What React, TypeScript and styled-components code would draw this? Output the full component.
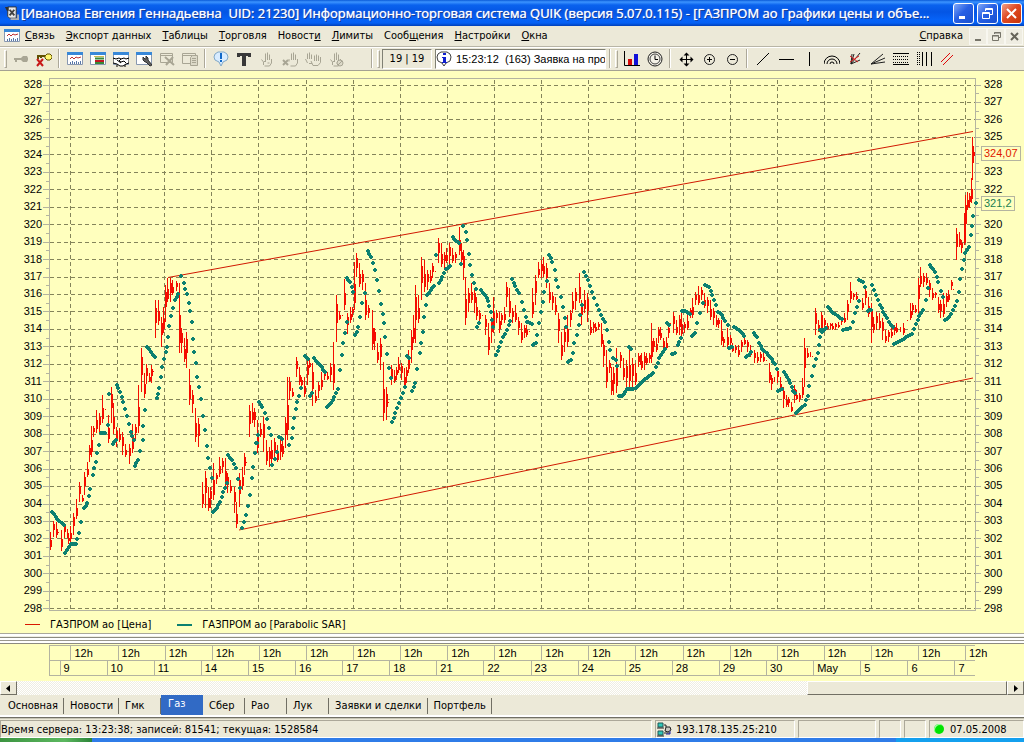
import React from "react";
import styled, { createGlobalStyle, css } from "styled-components";

const FACE = "#ece9d8";
const PAPER = "#ffffbe";
const UI = `"DejaVu Sans Condensed", "DejaVu Sans", sans-serif`;

const Global = createGlobalStyle`
  * { box-sizing: border-box; }
  body { margin: 0; background: ${FACE}; font-family: ${UI}; font-size: 11px; color: #000; }
  button { font: inherit; color: inherit; padding: 0; border: 0; background: none; cursor: default; }
  svg { display: block; flex-shrink: 0; }
`;

const Window = styled.div`
  display: flex;
  flex-direction: column;
  min-height: 100vh;
  overflow: hidden;
`;

/* ---------- title bar ---------- */
const TitleBar = styled.header`
  display: flex;
  align-items: center;
  height: 26px;
  padding: 0 2px 0 4px;
  gap: 2px;
  background: linear-gradient(#0a5ad8 0, #3c94ff 2px, #0a62ee 5px, #0455e4 12px, #0663f8 20px, #0560f4 23px, #0140b8 26px);
`;
const Title = styled.h1`
  flex: 1;
  min-width: 0;
  margin: 0;
  overflow: hidden;
  white-space: pre;
  font: 500 13px/20px "Open Sans", sans-serif;
  color: #fff;
  text-shadow: 0 0 1px #fff, 1px 1px 0 #0a2f88;
`;
const CaptionButton = styled.button<{ $danger?: boolean }>`
  display: grid;
  place-items: center;
  width: 21px;
  height: 21px;
  margin-left: 1px;
  border: 1px solid #fff;
  border-radius: 3px;
  background: ${(p) => (p.$danger ? "linear-gradient(135deg, #f0a088, #e04a24 45%, #c83408)" : "linear-gradient(135deg, #80a8f8, #2860e4 45%, #1850d0)")};
`;

/* ---------- menu bar ---------- */
const MenuBar = styled.nav`
  display: flex;
  align-items: center;
  height: 20px;
  padding: 0 1px 0 4px;
`;
const MenuItem = styled.button<{ $last?: boolean }>`
  height: 18px;
  padding: 0 6px 2px 5px;
  white-space: nowrap;
  ${(p) => p.$last && css`margin-left: auto;`}
`;
const MdiButton = styled.button`
  display: grid;
  place-items: center;
  width: 18px;
  height: 17px;
  border: 1px solid #f8f7f0;
  background: #efede2;
`;

/* ---------- toolbar ---------- */
const Toolbar = styled.div`
  display: flex;
  align-items: center;
  height: 25px;
  padding-left: 3px;
  border-top: 1px solid #b8b5a6;
  border-bottom: 1px solid #a5a292;
  box-shadow: inset 0 1px 0 #fff;
`;
const Tool = styled.button`
  display: grid;
  place-items: center;
  width: 23px;
  height: 22px;
  flex: none;
`;
const Grip = styled.i`
  width: 3px;
  height: 18px;
  margin: 0 2px 0 1px;
  border: 1px solid;
  border-color: #fff #aca899 #aca899 #fff;
`;
const Divider = styled.i`
  width: 2px;
  height: 19px;
  margin: 0 3px;
  border-left: 1px solid #aca899;
  border-right: 1px solid #fff;
`;
const Gap = styled.i`
  width: 21px;
`;
const Field = styled.div<{ $w: number; $white?: boolean }>`
  display: flex;
  align-items: center;
  justify-content: ${(p) => (p.$white ? "flex-start" : "center")};
  gap: 4px;
  flex: none;
  width: ${(p) => p.$w}px;
  height: 20px;
  margin-right: ${(p) => (p.$white ? 0 : 3)}px;
  overflow: hidden;
  white-space: pre;
  font: ${(p) => (p.$white ? `11px/16px "Liberation Sans", Arial, sans-serif` : `11px/16px ${UI}`)};
  border: 1px solid;
  border-color: #808074 #fff #fff #808074;
  background: ${(p) => (p.$white ? "#fff" : "transparent")};
`;

/* ---------- chart ---------- */
const Chart = styled.main`
  background: ${PAPER};
  padding-top: 6px;
`;
const PlotRow = styled.div`
  display: flex;
  height: 539px;
  font: 11px/15px "Liberation Sans", Arial, sans-serif;
`;
const Scale = styled.div<{ $right?: boolean }>`
  position: relative;
  display: flex;
  flex-direction: column;
  justify-content: space-between;
  flex: none;
  width: 43px;
  padding: ${(p) => (p.$right ? "0 0 0 3px" : "0 1px 0 0")};
  text-align: ${(p) => (p.$right ? "left" : "right")};
`;
const Tick = styled.span<{ $hidden?: boolean }>`
  visibility: ${(p) => (p.$hidden ? "hidden" : "visible")};
`;
const PriceTag = styled.output<{ $at: number; $color: string }>`
  position: absolute;
  left: 0;
  top: ${(p) => p.$at}px;
  padding: 0 2px;
  line-height: 13px;
  border: 1px solid #b4b4a0;
  background: ${PAPER};
  color: ${(p) => p.$color};
`;
const Plot = styled.svg`
  flex: 1;
  min-width: 0;
  height: 100%;
`;
const Legend = styled.div`
  display: flex;
  align-items: center;
  height: 17px;
  padding-left: 25px;
`;
const LegendItem = styled.span<{ $color: string; $thick: number }>`
  display: flex;
  align-items: center;
  gap: 10px;
  margin-right: 26px;
  &::before {
    content: "";
    width: 15px;
    height: ${(p) => p.$thick}px;
    background: ${(p) => p.$color};
  }
`;
const Splitter = styled.div`
  height: 11px;
  background: linear-gradient(#aaa89a 0 1px, #fff 1px 3px, #f0eee2 3px 4px, #8c8a80 4px 5px, #fff 5px 7px, #9a988c 7px 8px, #fff 8px 10px, #8c8a80 10px 11px);
`;
const TimeAxis = styled.div`
  padding: 1px 49px 5px;
  background: ${PAPER};
  font: 11px/15px "Liberation Sans", Arial, sans-serif;
`;
const TimeRow = styled.div<{ $first: number; $last: number }>`
  display: grid;
  grid-template-columns: minmax(0, ${(p) => p.$first}fr) repeat(19, minmax(0, 471fr)) minmax(0, ${(p) => p.$last}fr);
  height: 15px;
  border-top: 1px solid #b4b4a0;
  border-left: 1px solid #b4b4a0;
  &:last-child { height: 16px; border-bottom: 1px solid #b4b4a0; }
`;
const TimeCell = styled.span`
  padding-left: 3px;
  white-space: nowrap;
  border-left: 1px solid #b4b4a0;
`;

/* ---------- scroll bar ---------- */
const raised = css`
  border: 1px solid;
  border-color: #fff #716f64 #716f64 #fff;
  background: ${FACE};
`;
const ScrollBar = styled.div`
  display: flex;
  height: 14px;
  background: repeating-conic-gradient(#fff 0 25%, #efede2 0 50%) 0 0 / 2px 2px;
`;
const ScrollButton = styled.button`
  ${raised}
  display: grid;
  place-items: center;
  width: 17px;
  flex: none;
`;
const ScrollSpace = styled.div`
  flex: 792 1 0;
`;
const ScrollThumb = styled.div`
  ${raised}
  flex: 199 1 0;
`;

/* ---------- tabs ---------- */
const Tabs = styled.div`
  display: flex;
  height: 22px;
  padding-left: 2px;
  border-bottom: 2px solid #fff;
`;
const Tab = styled.button<{ $active?: boolean }>`
  min-width: 42px;
  height: 20px;
  padding: 1px 6px 0;
  text-align: left;
  white-space: nowrap;
  background: linear-gradient(#716f64, #716f64) right 3px / 1px 16px no-repeat;
  ${(p) =>
    p.$active &&
    css`
      padding: 0 7px 3px;
      color: #fff;
      background: #316ac5;
    `}
`;

/* ---------- status bar ---------- */
const StatusBar = styled.footer`
  display: flex;
  height: 21px;
  padding-top: 2px;
  gap: 3px;
  border-top: 1px solid #716f64;
  box-shadow: inset 0 1px 0 #c8c5b4;
`;
const Panel = styled.div<{ $w?: number }>`
  display: flex;
  align-items: center;
  gap: 4px;
  ${(p) => (p.$w ? `flex: none; width: ${p.$w}px;` : "flex: 1; min-width: 0;")}
  white-space: nowrap;
  border: 1px solid;
  border-color: #aca899 #fff #fff #aca899;
`;
const Led = styled.i`
  width: 10px;
  height: 10px;
  margin-left: 4px;
  margin-right: 2px;
  border-radius: 50%;
  background: #00e400;
  box-shadow: inset 1px 1px 0 #a0ffa0;
`;
const TaskbarEdge = styled.div`
  flex: 1;
  min-height: 4px;
  background:
    linear-gradient(90deg, #3c9440, #5cb860 70%, #2c8438) left / 92px 100% no-repeat,
    linear-gradient(#2f7ce8, #2f7ce8) left / 87.5% 100% no-repeat,
    #14a0ee;
`;

/* ---------- quotes ---------- */
/* Each block holds x, high, low triples, three units per plot pixel, from the block's origin. */
type Block = { ox: number; oy: number; bars: number[]; sar: number[][] };

const blocks: Block[] = [
  {
    ox: 0,
    oy: 240,
    bars: [
      151, 875, 930, 160, 843, 890, 169, 845, 895, 176, 875, 878, 184, 870, 932, 193, 850, 895, 202, 868, 895, 206, 890, 912,
      212, 858, 905, 219, 820, 885, 228, 778, 838, 238, 725, 785, 246, 765, 785, 254, 695, 765, 262, 665, 710, 267, 615, 665,
      273, 558, 650, 281, 558, 592, 290, 510, 580, 299, 520, 578, 308, 465, 550, 317, 507, 510, 325, 525, 610, 333, 440, 550,
      341, 490, 582, 349, 562, 622, 358, 565, 605, 367, 575, 645, 376, 612, 650, 388, 612, 672, 397, 553, 640, 406, 553, 598,
      414, 435, 580, 423, 325, 455, 432, 400, 475, 440, 373, 432, 447, 400, 425, 454, 375, 428, 460, 392, 395, 466, 180, 293,
      474, 180, 255, 483, 230, 320, 490, 200, 280, 495, 135, 245, 502, 113, 185, 510, 115, 185, 518, 120, 165, 528, 122, 152,
      537, 130, 340, 545, 265, 340, 553, 295, 365, 560, 275, 385, 569, 388, 495, 577, 450, 520, 587, 505, 605, 596, 535, 622,
      607, 725, 803, 616, 693, 803, 625, 740, 812, 632, 740, 805, 640, 670, 780, 650, 700, 733, 659, 650, 710, 667, 655, 700,
      675, 655, 740, 683, 700, 760, 692, 720, 760, 702, 740, 820, 709, 785, 865, 719, 700, 800, 728, 680, 750, 734, 640, 705,
      740, 665, 668, 748, 495, 592, 756, 490, 550, 764, 505, 560, 773, 540, 640,
    ],
    sar: [
      [157, 815, 172, 838, 191, 855],
      [195, 938, 212, 913, 227, 912, 236, 880, 244, 845, 252, 805, 261, 788, 270, 748, 278, 705, 287, 665, 296, 615, 304, 580, 316, 578, 324, 555],
      [328, 463],
      [338, 612, 347, 600],
      [350, 435, 360, 455, 370, 485, 382, 528, 392, 575, 401, 600],
      [404, 677, 413, 660, 421, 633, 428, 600, 430, 558, 436, 510],
      [440, 320, 452, 335, 464, 352],
      [470, 475, 474, 462, 478, 443, 482, 410, 487, 380, 491, 357, 497, 335, 500, 320, 505, 292, 508, 258, 514, 228, 518, 203, 526, 180, 535, 162],
      [543, 108, 551, 130, 555, 148, 560, 163, 566, 190, 569, 213, 575, 245, 578, 297, 583, 335, 587, 368, 592, 410, 596, 442, 602, 478, 610, 527, 614, 570, 620, 618, 623, 655, 630, 685, 637, 713],
      [640, 817, 650, 805, 660, 785, 670, 755, 680, 730],
      [684, 645, 697, 660, 708, 685, 715, 718, 719, 745],
      [725, 865, 733, 845, 737, 825, 743, 797, 750, 765, 755, 715, 760, 680, 764, 640, 769, 608, 773, 585],
    ],
  },
  {
    ox: 240,
    oy: 200,
    bars: [
      62, 670, 710, 70, 650, 755, 78, 720, 795, 87, 740, 800, 95, 720, 790, 104, 715, 780, 112, 735, 785, 120, 720, 780, 128, 710, 770,
      135, 650, 745, 141, 530, 720, 149, 530, 600, 158, 565, 590, 169, 470, 530, 177, 500, 555, 185, 530, 570, 193, 530, 590,
      202, 480, 555, 209, 478, 505, 217, 490, 618, 227, 570, 610, 236, 545, 595, 245, 515, 570, 253, 510, 540, 262, 515, 540,
      271, 490, 545, 280, 425, 570, 289, 285, 425, 298, 333, 360, 306, 345, 348, 314, 238, 330, 322, 340, 402, 330, 320, 370,
      338, 322, 350, 344, 185, 330, 350, 158, 230, 359, 190, 260, 368, 210, 270, 376, 250, 360, 386, 315, 355, 396, 330, 450,
      404, 385, 450, 412, 430, 490, 420, 415, 510, 430, 485, 662, 438, 560, 660, 445, 605, 608, 454, 495, 555, 462, 510, 550,
      469, 500, 540, 475, 470, 520, 484, 490, 540, 492, 505, 560, 499, 500, 550, 505, 450, 520, 513, 390, 490, 520, 345, 430,
      527, 255, 430, 536, 285, 370, 545, 170, 300, 553, 180, 275, 561, 210, 270, 570, 210, 250, 578, 190, 235, 586, 213, 216,
      595, 115, 190, 603, 130, 200, 612, 155, 205, 620, 145, 190, 629, 130, 195, 638, 145, 190, 647, 155, 190, 657, 80, 165,
    ],
    sar: [
      [50, 730],
      [58, 605, 67, 622, 75, 640, 82, 657, 87, 685, 92, 706],
      [96, 795, 104, 778, 112, 757],
      [118, 712, 127, 716],
      [148, 736, 155, 715, 158, 685, 163, 655, 168, 628, 172, 606, 176, 588, 184, 565],
      [196, 468, 205, 478],
      [209, 588, 217, 578],
      [223, 475, 235, 490, 245, 502, 254, 515],
      [260, 622, 272, 608, 283, 590, 294, 568, 299, 510, 305, 465, 310, 430, 314, 400, 320, 366],
      [320, 233, 330, 245, 336, 260, 340, 275],
      [346, 405, 350, 395, 355, 380, 360, 350, 367, 310, 375, 280],
      [383, 153, 392, 172, 400, 188, 405, 210, 412, 240, 418, 272, 424, 312, 429, 342, 433, 370, 436, 410, 442, 462, 446, 505, 452, 535],
      [455, 667, 466, 640, 478, 608, 488, 580, 496, 560],
      [502, 468, 508, 473],
      [516, 573, 525, 550, 532, 508, 539, 458, 542, 430, 548, 395, 553, 350, 557, 316, 561, 285, 572, 270, 582, 258],
      [588, 165],
      [598, 248, 607, 230, 617, 208, 631, 197],
      [638, 112, 648, 122, 658, 128],
      [663, 192],
    ],
  },
  {
    ox: 440,
    oy: 200,
    bars: [
      65, 130, 190, 70, 150, 240, 77, 230, 375, 84, 265, 335, 93, 250, 310, 102, 265, 340, 110, 290, 360, 118, 330, 375, 127, 345, 348,
      137, 345, 405, 145, 370, 465, 154, 350, 430, 161, 290, 400, 168, 330, 370, 177, 335, 400, 185, 340, 375, 192, 320, 370,
      200, 245, 320, 208, 265, 350, 217, 325, 370, 226, 315, 365, 235, 350, 405, 244, 370, 430, 252, 375, 415, 260, 375, 410,
      268, 393, 396, 278, 265, 355, 286, 225, 315, 295, 185, 235, 303, 180, 235, 311, 170, 230, 319, 190, 265, 329, 250, 310,
      338, 275, 330, 347, 290, 345, 356, 340, 430, 364, 395, 480, 373, 380, 455, 382, 345, 440, 390, 330, 380, 398, 275, 340,
      407, 265, 330, 418, 220, 310, 425, 300, 375, 434, 270, 340, 443, 280, 365, 450, 360, 405, 459, 365, 400, 467, 370, 395,
      475, 365, 390, 483, 370, 440, 490, 420, 500, 499, 450, 565, 508, 480, 520, 513, 500, 585, 521, 500, 585, 530, 445, 580,
      540, 455, 505, 549, 475, 540, 560, 480, 570, 568, 440, 560, 577, 475, 560, 586, 490, 555, 594, 460, 500, 603, 460, 510,
    ],
    sar: [
      [70, 78, 78, 95, 82, 120, 88, 163, 91, 195, 96, 225, 101, 248, 107, 268],
      [111, 380, 118, 370],
      [124, 270, 135, 285, 144, 302, 147, 318, 152, 335, 155, 360, 160, 380],
      [168, 465, 178, 440, 190, 412, 200, 390, 211, 362],
      [216, 238, 226, 258, 237, 280, 245, 305, 252, 330, 257, 350, 260, 365, 275, 372],
      [278, 434, 287, 428, 292, 405, 298, 370, 303, 335, 308, 305, 312, 275, 320, 242],
      [326, 165, 337, 185, 345, 210, 349, 240, 355, 262, 363, 290, 370, 322, 374, 355, 379, 382],
      [383, 485, 392, 480, 398, 460, 403, 430, 410, 405, 416, 375, 420, 345, 425, 315],
      [431, 215, 443, 240, 456, 275, 470, 315, 482, 345, 495, 367, 502, 390, 506, 425, 511, 450, 519, 475, 527, 480, 530, 498],
      [536, 588, 545, 588, 562, 568, 580, 568, 600, 552, 615, 538, 640, 520, 648, 500, 658, 475, 675, 448],
      [567, 442, 573, 446],
      [680, 370, 688, 376],
    ],
  },
  {
    ox: 640,
    oy: 260,
    bars: [
      1, 285, 315, 14, 275, 330, 20, 280, 315, 28, 280, 310, 34, 190, 310, 41, 235, 275, 50, 235, 275, 56, 200, 250, 62, 200, 240,
      70, 235, 275, 78, 230, 270, 84, 195, 235, 92, 190, 193, 100, 155, 220, 109, 180, 225, 117, 165, 225, 125, 160, 235, 133, 185, 220,
      141, 160, 210, 150, 145, 175, 158, 115, 175, 167, 95, 135, 175, 78, 135, 185, 82, 120, 193, 100, 145, 202, 110, 160,
      210, 120, 180, 219, 145, 195, 228, 165, 200, 235, 175, 205, 243, 180, 255, 251, 230, 260, 262, 205, 260, 270, 225, 265,
      278, 250, 275, 287, 255, 280, 296, 255, 290, 305, 240, 275, 314, 225, 255, 323, 240, 275, 332, 255, 290, 343, 270, 310,
      352, 275, 310, 360, 275, 305, 370, 280, 305, 379, 301, 304, 387, 310, 370, 395, 345, 390, 403, 350, 365, 411, 325, 370,
      421, 350, 395, 430, 380, 445, 438, 405, 440, 446, 410, 440, 454, 425, 455, 462, 375, 430, 470, 390, 420, 478, 400, 425,
      486, 355, 415, 493, 235, 380, 501, 265, 295, 510, 275, 290, 517, 288, 291, 526, 145, 225, 535, 180, 215, 545, 155, 200,
    ],
    sar: [
      [95, 283, 105, 278, 113, 255, 122, 235],
      [125, 152, 140, 155, 150, 162],
      [155, 228, 165, 220, 172, 190, 180, 160, 188, 128],
      [195, 75, 207, 82, 217, 105, 227, 135, 235, 155, 245, 165, 255, 182, 263, 195],
      [268, 264, 277, 260],
      [282, 202, 297, 210, 313, 228],
      [317, 292, 326, 285, 334, 275],
      [341, 220, 350, 232, 357, 250, 366, 268, 380, 280, 395, 297, 405, 312, 410, 328],
      [413, 392, 427, 387],
      [432, 337, 441, 350, 450, 370, 460, 392, 464, 398],
      [467, 460, 480, 448, 494, 434, 503, 408, 508, 378, 515, 348, 521, 318, 527, 298, 533, 280, 537, 255, 545, 215, 558, 205],
      [563, 142, 580, 158, 605, 178],
      [610, 210, 630, 205, 638, 185, 645, 160, 650, 140, 656, 122],
      [658, 60, 668, 67, 675, 80],
      [683, 152, 692, 150],
    ],
  },
  {
    ox: 820,
    oy: 100,
    bars: [
      4, 640, 690, 13, 655, 690, 21, 670, 690, 30, 670, 688, 38, 670, 690, 46, 670, 690, 55, 665, 685, 65, 655, 675, 73, 640, 670,
      82, 600, 660, 91, 545, 610, 100, 580, 600, 109, 575, 600, 117, 597, 600, 127, 595, 630, 137, 560, 615, 146, 590, 650,
      154, 610, 730, 161, 650, 700, 169, 635, 690, 178, 640, 690, 187, 655, 720, 196, 690, 730, 205, 690, 725, 213, 680, 715,
      222, 675, 705, 230, 670, 700, 240, 680, 695, 250, 670, 705, 262, 660, 663, 270, 610, 660, 278, 610, 645, 287, 615, 640,
      295, 535, 640, 302, 500, 560, 311, 520, 560, 319, 520, 555, 328, 540, 590, 336, 565, 600, 345, 575, 595, 354, 590, 640,
      361, 600, 655, 370, 580, 650, 378, 580, 620, 386, 570, 605, 394, 540, 570, 400, 567, 570, 410, 385, 480, 417, 395, 440,
      425, 420, 460, 432, 340, 435, 437, 285, 430, 443, 275, 330, 448, 280, 325, 453, 235, 310, 456, 110, 240, 461, 140, 172,
    ],
    sar: [
      [0, 712, 1, 690, 12, 690, 18, 684],
      [155, 555, 168, 585, 180, 615, 195, 645, 208, 665, 220, 682],
      [222, 733, 240, 724, 258, 712, 275, 703, 287, 672, 298, 648, 310, 630, 318, 600, 325, 565],
      [329, 495, 345, 515, 355, 545, 363, 572, 370, 590],
      [374, 661, 388, 652, 400, 630, 412, 603, 416, 575, 421, 537, 425, 507, 431, 480, 436, 460, 447, 440],
      [452, 405],
      [457, 378],
      [460, 348],
      [467, 310],
    ],
  },
];

const priceY = (v: number) => Math.round(84.5 + (328 - v) * 17.46);
const prices = Array.from({ length: 31 }, (_, i) => 328 - i);
const noons = Array.from({ length: 20 }, (_, i) => Math.round(70 + i * 47.12));

/* One bar: a one-pixel wick with a two-pixel body over its middle part. */
const barPath = blocks
  .flatMap((b) => {
    const out: string[] = [];
    for (let i = 0; i < b.bars.length; i += 3) {
      const x = Math.round(b.ox + b.bars[i] / 3 - 0.4);
      const hi = Math.round(b.oy + b.bars[i + 1] / 3);
      const lo = Math.max(hi + 1, Math.round(b.oy + b.bars[i + 2] / 3));
      const h = lo - hi;
      out.push(`M${x} ${hi}h1v${h}h-1z`);
      if (h > 5) {
        const from = hi + Math.round(h * (i % 2 ? 0.2 : 0.45));
        out.push(`M${x + 1} ${from}h1v${Math.round(h * 0.4)}h-1z`);
      }
    }
    return out;
  })
  .join("");

const dots: [number, number][] = blocks.flatMap((b) =>
  b.sar.flatMap((run) => {
    const pts: [number, number][] = [];
    const last = run.length - 2;
    for (let i = 0; i < last; i += 2) {
      const [x0, y0, x1, y1] = run.slice(i, i + 4);
      const n = Math.max(1, Math.round((x1 - x0) / 6));
      for (let k = 0; k < n; k++) pts.push([x0 + ((x1 - x0) * k) / n, y0 + ((y1 - y0) * k) / n]);
    }
    pts.push([run[last], run[last + 1]]);
    return pts.map(([x, y]): [number, number] => [Math.round(b.ox + x / 3), Math.round(b.oy + y / 3)]);
  })
);
const dotPath = dots.map(([x, y]) => `M${x - 1} ${y - 2}h2v1h1v2h-1v1h-2v-1h-1v-2h1z`).join("");

const PriceChart = () => (
  <Plot viewBox="43 77 938 539" preserveAspectRatio="none" role="img" aria-label="ГАЗПРОМ ао">
    <g shapeRendering="crispEdges" fill="none">
      <g stroke="#84845a" strokeDasharray="4 3">
        {prices.map((v) => (
          <path key={v} d={`M50 ${priceY(v) + 0.5}H975`} />
        ))}
        {noons.map((x) => (
          <path key={x} d={`M${x + 0.5} 80V610`} />
        ))}
      </g>
      <path d="M49.5 610.5V78.5H975.5V610.5z" stroke="#b4b4a0" />
      <g stroke="#b4b4a0">
        {prices.map((v) => (
          <path key={v} d={`M43 ${priceY(v) + 0.5}h6M976 ${priceY(v) + 0.5}h5`} />
        ))}
        {prices.slice(1).map((v) => (
          <path key={v} d={`M46 ${priceY(v + 0.5) + 0.5}h3M976 ${priceY(v + 0.5) + 0.5}h3`} />
        ))}
      </g>
      <path d={barPath} fill="#f40c00" />
    </g>
    <path d="M168 277.5L973 131.5M239 530L973 378" stroke="#d01800" fill="none" />
    <path d={dotPath} fill="#0c8070" shapeRendering="crispEdges" />
  </Plot>
);

/* ---------- icons, on a 16 pixel grid ---------- */
const GREY = "#a8a594";
const hand = "M4.500 14V11L2.500 8.500M6.500 10V2.500M8.500 9V1.500M10.500 9V3.500M12.500 8v4l-2 3h-5M5 10.500h2M8.500 12h2";
const sheet = (
  <>
    <path d="M.5 2.500h15v11h-15z" fill="#fff" stroke="#8898b0" />
    <path d="M0 1h16v3H0z" fill="#3888d8" />
  </>
);

const glyphs: Record<string, React.ReactNode> = {
  key: <path d="M1 7h7v2H1zM2 9h2v2H2zM8 7l2-2h4l1 2v2l-1 2h-4L8 9z" fill={GREY} />,
  keyOff: (
    <>
      <path d="M1 5h8M2 5v3M5 5v2" stroke="#605000" strokeWidth="2" />
      <path d="M9 5l2-2h3l2 2v2l-2 2h-3L9 7z" fill="#fff870" stroke="#605000" />
      <path d="M1 8l6 7M7 8l-6 7" stroke="#c81818" strokeWidth="2" />
    </>
  ),
  chart: (
    <>
      {sheet}
      <path d="M3 8l2-2 2 2 2-2 2 1 3-1" stroke="#c03030" />
      <path d="M3.500 13v-2M5.500 13v-3M7.500 13v-2M9.500 13v-3M11.500 13v-2M13.500 13v-3" stroke="#5878a8" />
    </>
  ),
  table: (
    <>
      {sheet}
      <path d="M4 5.500h10" stroke="#c8b850" />
      <path d="M5 7.500h9M5 12h9" stroke="#388838" strokeWidth="2" />
      <path d="M5 10h9" stroke="#c01820" strokeWidth="2" />
    </>
  ),
  deal: (
    <>
      {sheet}
      <path d="M0 7l3 1 3-1 2 1 3-1 2 1 3-1v5l-3 1-3 2H7l-3-2-4-1z" fill="#fff" stroke="#000" />
      <path d="M4 9l4 3M8 8l-2 2 2 1 3-1 2 2M3 15h2M11 15h2" stroke="#000" />
    </>
  ),
  tools: (
    <>
      {sheet}
      <path d="M7 6l0 3 2 2 1 0 4 4 2-1-4-5V7l-2-2v3H9z" fill="#606060" stroke="#303030" />
    </>
  ),
  sheetOff: (
    <>
      <path d="M1.500 2.500h12v9h-12zM1 4.500h12" stroke={GREY} />
      <path d="M6 6l9 8M14 6l-7 8" stroke={GREY} strokeWidth="2" />
    </>
  ),
  sheets: (
    <>
      <path d="M.5 2.500h13v10h-13zM1 4.500h12" stroke={GREY} />
      <path d="M8.500 6.500l2-2h5v10h-7z" fill="#dcd9c8" stroke={GREY} />
      <path d="M10 7.500h4M10 9.500h4M10 11.500h4" stroke={GREY} />
    </>
  ),
  alert: (
    <>
      <path d="M5 1h6l3 2 1 3-1 3-4 2-2 4-2-4-4-2-1-3 1-3z" fill="#d8ecff" stroke="#80a8c8" />
      <path d="M7 2h2v6H7zM7 9h2v2H7z" fill="#1068c8" />
    </>
  ),
  text: <path d="M1 2h14v4h-3V5H10v10H6V5H4v1H1z" fill="#383838" />,
  hand: <path d={hand} stroke={GREY} />,
  handOff: (
    <>
      <path d="M7 10.500V8M9.500 9V2.500M11.500 9V1.500M13.500 9V3.500M15.500 8v4l-2 3h-5" stroke={GREY} />
      <path d="M1 9l5 5M6 9l-5 5" stroke={GREY} strokeWidth="2" />
    </>
  ),
  hands: (
    <>
      <path d="M.5 8l2 4M2.500 8V2.500M4.500 8V1.500M6.500 8V3.500M4 12.500h3" stroke={GREY} />
      <path d="M6 10l2 4.500h5l2.500-3V6M9.500 10V4.500M11.500 10V3.500M13.500 10V4.500" stroke={GREY} />
    </>
  ),
  handStop: (
    <>
      <path d={hand} stroke={GREY} />
      <circle cx="12" cy="12" r="3" fill="#dcd9c8" stroke={GREY} />
      <path d="M10 14l4-4" stroke={GREY} />
    </>
  ),
  info: (
    <>
      <path d="M5 1h6l3 2 1 3-1 4-4 2-2 3-2-3-4-2-1-4 1-3z" fill="#fff" stroke="#404040" />
      <path d="M7 2h3v2H7zM6 6h4v5h1v1H6v-1h1V7H6z" fill="#1020d0" />
    </>
  ),
  columns: (
    <>
      <path d="M.5 0v14.500h15.500" stroke="#000" strokeWidth="1" />
      <path d="M4 8h4v6H4z" fill="#d80808" />
      <path d="M10 3h4v11h-4z" fill="#1010d8" />
    </>
  ),
  clock: (
    <>
      <circle cx="8" cy="8" r="7" fill="#f4f2e8" stroke="#202020" />
      <circle cx="8" cy="8" r="5" stroke="#404040" />
      <path d="M8 4.500v4h3" stroke="#000" />
    </>
  ),
  move: (
    <>
      <path d="M8.500 3v11M3 8.500h11" stroke="#000" />
      <path d="M8.500 1.500l3 3h-6zM8.500 15.500l3-3h-6zM1.500 8.500l3-3v6zM15.500 8.500l-3-3v6z" fill="#000" />
    </>
  ),
  zoomIn: (
    <>
      <circle cx="8.500" cy="8.500" r="5" stroke="#202020" />
      <path d="M6 8.500h5M8.500 6v5" stroke="#000" />
    </>
  ),
  zoomOut: (
    <>
      <circle cx="8.500" cy="8.500" r="5" stroke="#202020" />
      <path d="M6 8.500h5" stroke="#000" />
    </>
  ),
  line: <path d="M2 14L14 2" stroke="#000" />,
  hline: <path d="M1 8.500h15" stroke="#000" />,
  vline: <path d="M8.500 1v14" stroke="#000" />,
  arcs: <path d="M0 13a8 8 0 0 1 16 0M3 13a5 5 0 0 1 10 0M6 13a2 2 0 0 1 4 0" stroke="#000" />,
  fanRed: (
    <>
      <path d="M4 13L13 2M4 13L5 3M4 13L13 9M4 13l3-10" stroke="#202020" />
      <path d="M3 5l8 6M3 11l9-6" stroke="#e02020" />
    </>
  ),
  fan: <path d="M1 13L13 3M1 13L15 7M1 13L15 11" stroke="#202020" />,
  hlines: (
    <>
      <path d="M0 2.500h16M0 13.500h16" stroke="#000" />
      <path d="M0 5.500h16M0 8.500h16M0 11.500h16" stroke="#000" strokeDasharray="1 1" />
    </>
  ),
  vlines: (
    <>
      <path d="M1.500 1v14M3.500 1v14" stroke="#000" strokeDasharray="1 1" />
      <path d="M6.500 1v14M10.500 1v14M15.500 1v14" stroke="#000" />
    </>
  ),
  channel: <path d="M2 11L11 2M4 14L14 4" stroke="#e00808" strokeWidth="1" />,
  app: (
    <>
      <path d="M4 1h9v12H6L4 11z" fill="#e8e8e8" stroke="#303030" />
      <path d="M1 1h4v4H3z" fill="#303030" />
      <path d="M6 4l5 6M11 4l-5 6" stroke="#404040" strokeWidth="2" />
      <path d="M7 14h8V9" stroke="#b0b0b0" strokeWidth="2" />
    </>
  ),
  network: (
    <>
      <path d="M2 2h5v4H2zM2 10h5v4H2z" fill="#30c8b8" stroke="#205858" />
      <path d="M1 7h7M1 15h7M8 4h2v2M8 12h6" stroke="#202020" />
      <path d="M10 6l4 0 1 3-3 2-3-1z" fill="#c8c8c0" stroke="#202020" />
      <path d="M14 10v3h-4" stroke="#2020a0" />
    </>
  ),
};

const Icon = ({ name, size = 16 }: { name: string; size?: number }) => (
  <svg width={size} height={size} viewBox="0 0 16 16" fill="none" aria-hidden="true">
    {glyphs[name]}
  </svg>
);

const Tools = ({ items }: { items: [string, string][] }) => (
  <>
    {items.map(([icon, label]) => (
      <Tool key={icon} aria-label={label}>
        <Icon name={icon} />
      </Tool>
    ))}
  </>
);

const menus: [string, string, string][] = [
  ["", "С", "вязь"],
  ["", "Э", "кспорт данных"],
  ["", "Т", "аблицы"],
  ["", "Т", "орговля"],
  ["Новост", "и", ""],
  ["", "Л", "имиты"],
  ["Сооб", "щ", "ения"],
  ["", "Н", "астройки"],
  ["", "О", "кна"],
];

const days = ["9", "10", "11", "14", "15", "16", "17", "18", "21", "22", "23", "24", "25", "28", "29", "30", "May", "5", "6", "7"];
const tabs = ["Основная", "Новости", "Гмк", "Газ", "Сбер", "Рао", "Лук", "Заявки и сделки", "Портфель"];

export default function App() {
  return (
    <Window>
      <Global />
      <TitleBar>
        <Icon name="app" size={15} />
        <Title>
          {"[Иванова Евгения Геннадьевна  UID: 21230] Информационно-торговая система QUIK (версия 5.07.0.115) - [ГАЗПРОМ ао Графики цены и объе..."}
        </Title>
        <CaptionButton aria-label="Свернуть">
          <svg width="13" height="13"><path d="M2 9h6v3H2z" fill="#fff" /></svg>
        </CaptionButton>
        <CaptionButton aria-label="Восстановить">
          <svg width="13" height="13" fill="none" stroke="#fff"><path d="M4.500 4V1.500h7v6H9M4 2.500h8M1.500 5.500h7v6h-7zM1 6.500h8" /></svg>
        </CaptionButton>
        <CaptionButton $danger aria-label="Закрыть">
          <svg width="13" height="13" stroke="#fff" strokeWidth="2"><path d="M2 2l9 9M11 2l-9 9" /></svg>
        </CaptionButton>
      </TitleBar>

      <MenuBar>
        <Icon name="chart" />
        {menus.map(([before, key, after]) => (
          <MenuItem key={before + key + after}>
            {before}
            <u>{key}</u>
            {after}
          </MenuItem>
        ))}
        <MenuItem $last>
          <u>С</u>правка
        </MenuItem>
        <MdiButton aria-label="Свернуть окно">
          <svg width="11" height="11"><path d="M2 8h6v2H2z" fill="#77756a" /></svg>
        </MdiButton>
        <MdiButton aria-label="Восстановить окно">
          <svg width="11" height="11" fill="none" stroke="#77756a"><path d="M3.500 3V1.500h6v5H8M3 2h7M1.500 4.500h6v5h-6zM1 5h7" /></svg>
        </MdiButton>
        <MdiButton aria-label="Закрыть окно">
          <svg width="11" height="11" stroke="#66645a" strokeWidth="2"><path d="M2 2l7 7M9 2l-7 7" /></svg>
        </MdiButton>
      </MenuBar>

      <Toolbar role="toolbar">
        <Grip />
        <Tools items={[["key", "Подключиться"], ["keyOff", "Отключиться"]]} />
        <Divider />
        <Tools
          items={[
            ["chart", "График"],
            ["table", "Таблица"],
            ["deal", "Сделки"],
            ["tools", "Настройка"],
            ["sheetOff", "Удалить"],
            ["sheets", "Копировать"],
          ]}
        />
        <Divider />
        <Tools
          items={[
            ["alert", "Сообщение"],
            ["text", "Текст"],
            ["hand", "Заявка"],
            ["handOff", "Снять заявку"],
            ["hands", "Заявки"],
            ["handStop", "Стоп-заявка"],
          ]}
        />
        <Gap />
        <Divider />
        <Grip />
        <Field $w={50}>19 | 19</Field>
        <Field $w={171} $white>
          <Icon name="info" />
          15:23:12  (163) Заявка на про
        </Field>
        <Divider />
        <Grip />
        <Tools items={[["columns", "Вид графика"], ["clock", "Интервал"]]} />
        <Divider />
        <Tools items={[["move", "Переместить"], ["zoomIn", "Увеличить"], ["zoomOut", "Уменьшить"]]} />
        <Divider />
        <Tools
          items={[
            ["line", "Линия тренда"],
            ["hline", "Горизонтальная линия"],
            ["vline", "Вертикальная линия"],
            ["arcs", "Дуги"],
            ["fanRed", "Линии Ганна"],
            ["fan", "Веер"],
            ["hlines", "Уровни"],
            ["vlines", "Временные зоны"],
            ["channel", "Канал"],
          ]}
        />
      </Toolbar>

      <Chart>
        <PlotRow>
          <Scale>
            {prices.map((v) => (
              <Tick key={v}>{v}</Tick>
            ))}
          </Scale>
          <PriceChart />
          <Scale $right>
            {prices.map((v) => (
              <Tick key={v} $hidden={v === 324 || v === 321}>
                {v}
              </Tick>
            ))}
            <PriceTag $at={69} $color="#e01800">324,07</PriceTag>
            <PriceTag $at={119} $color="#188050">321,2</PriceTag>
          </Scale>
        </PlotRow>
        <Legend>
          <LegendItem $color="#d81800" $thick={1}>ГАЗПРОМ ао [Цена]</LegendItem>
          <LegendItem $color="#0c8070" $thick={2}>ГАЗПРОМ ао [Parabolic SAR]</LegendItem>
        </Legend>
      </Chart>
      <Splitter />
      <TimeAxis>
        <TimeRow $first={205} $last={100}>
          <i />
          {noons.map((x) => (
            <TimeCell key={x}>12h</TimeCell>
          ))}
        </TimeRow>
        <TimeRow $first={95} $last={205}>
          <i />
          {days.map((d) => (
            <TimeCell key={d}>{d}</TimeCell>
          ))}
        </TimeRow>
      </TimeAxis>

      <ScrollBar>
        <ScrollButton aria-label="Влево">
          <svg width="5" height="7"><path d="M4 0v7L0 3.500z" /></svg>
        </ScrollButton>
        <ScrollSpace />
        <ScrollThumb />
        <ScrollButton aria-label="Вправо">
          <svg width="5" height="7"><path d="M1 0v7l4-3.500z" /></svg>
        </ScrollButton>
      </ScrollBar>

      <Tabs role="tablist">
        {tabs.map((t) => (
          <Tab key={t} role="tab" aria-selected={t === "Газ"} $active={t === "Газ"}>
            {t}
          </Tab>
        ))}
      </Tabs>

      <StatusBar>
        <Panel>Время сервера: 13:23:38; записей: 81541; текущая: 1528584</Panel>
        <Panel $w={140}>
          <Icon name="network" />
          193.178.135.25:210
        </Panel>
        <Panel $w={78} />
        <Panel $w={22} />
        <Panel $w={22} />
        <Panel $w={95}>
          <Led />
          07.05.2008
        </Panel>
      </StatusBar>
      <TaskbarEdge />
    </Window>
  );
}
